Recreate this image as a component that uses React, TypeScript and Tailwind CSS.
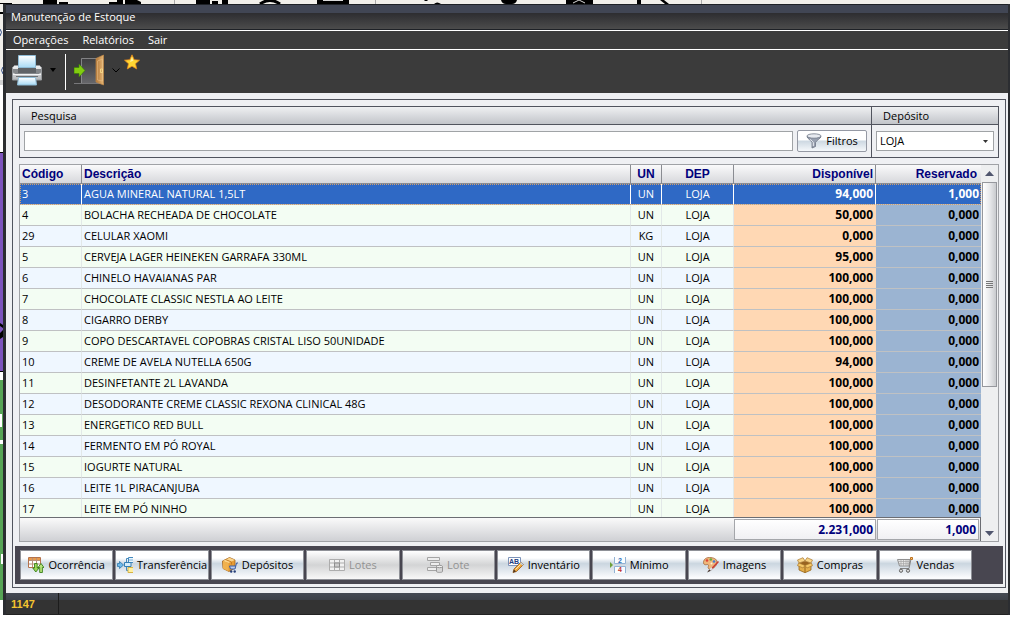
import { ReactNode } from 'react';
import { clsx } from 'clsx';

interface StockItem {
  code: string;
  description: string;
  unit: string;
  deposit: string;
  available: string;
  reserved: string;
}

const items: StockItem[] = [
  { code: '3', description: 'AGUA MINERAL NATURAL 1,5LT', unit: 'UN', deposit: 'LOJA', available: '94,000', reserved: '1,000' },
  { code: '4', description: 'BOLACHA RECHEADA DE CHOCOLATE', unit: 'UN', deposit: 'LOJA', available: '50,000', reserved: '0,000' },
  { code: '29', description: 'CELULAR XAOMI', unit: 'KG', deposit: 'LOJA', available: '0,000', reserved: '0,000' },
  { code: '5', description: 'CERVEJA LAGER HEINEKEN GARRAFA 330ML', unit: 'UN', deposit: 'LOJA', available: '95,000', reserved: '0,000' },
  { code: '6', description: 'CHINELO HAVAIANAS PAR', unit: 'UN', deposit: 'LOJA', available: '100,000', reserved: '0,000' },
  { code: '7', description: 'CHOCOLATE CLASSIC NESTLA AO LEITE', unit: 'UN', deposit: 'LOJA', available: '100,000', reserved: '0,000' },
  { code: '8', description: 'CIGARRO DERBY', unit: 'UN', deposit: 'LOJA', available: '100,000', reserved: '0,000' },
  { code: '9', description: 'COPO DESCARTAVEL COPOBRAS CRISTAL LISO 50UNIDADE', unit: 'UN', deposit: 'LOJA', available: '100,000', reserved: '0,000' },
  { code: '10', description: 'CREME DE AVELA NUTELLA 650G', unit: 'UN', deposit: 'LOJA', available: '94,000', reserved: '0,000' },
  { code: '11', description: 'DESINFETANTE 2L LAVANDA', unit: 'UN', deposit: 'LOJA', available: '100,000', reserved: '0,000' },
  { code: '12', description: 'DESODORANTE CREME CLASSIC REXONA CLINICAL 48G', unit: 'UN', deposit: 'LOJA', available: '100,000', reserved: '0,000' },
  { code: '13', description: 'ENERGETICO RED BULL', unit: 'UN', deposit: 'LOJA', available: '100,000', reserved: '0,000' },
  { code: '14', description: 'FERMENTO EM PÓ ROYAL', unit: 'UN', deposit: 'LOJA', available: '100,000', reserved: '0,000' },
  { code: '15', description: 'IOGURTE NATURAL', unit: 'UN', deposit: 'LOJA', available: '100,000', reserved: '0,000' },
  { code: '16', description: 'LEITE 1L PIRACANJUBA', unit: 'UN', deposit: 'LOJA', available: '100,000', reserved: '0,000' },
  { code: '17', description: 'LEITE EM PÓ NINHO', unit: 'UN', deposit: 'LOJA', available: '100,000', reserved: '0,000' }
];

function Icon({ children }: { children: ReactNode }) {
  return (
    <svg width="16" height="16" viewBox="0 0 16 16" className="shrink-0" aria-hidden="true">
      {children}
    </svg>
  );
}

function PrinterIcon() {
  return (
    <svg width="32" height="32" viewBox="0 0 32 32" aria-hidden="true">
      <defs>
        <linearGradient id="paper" x1="0" y1="0" x2="0" y2="1">
          <stop offset="0" stopColor="#ffffff" />
          <stop offset="1" stopColor="#a9dbf5" />
        </linearGradient>
        <linearGradient id="printer" x1="0" y1="0" x2="0" y2="1">
          <stop offset="0" stopColor="#f2f2f2" />
          <stop offset="1" stopColor="#b4b7ba" />
        </linearGradient>
      </defs>
      <path d="M2.5 11.500h25l2 2v12.500h-29v-12.500z" fill="url(#printer)" stroke="#96999c" />
      <path d="M1 15h28v3.500l-3 2H4l-3-2z" fill="#85888b" />
      <path d="M6 14h18v5H6z" fill="#606366" />
      <path d="M6.500 1.500h17v12h-17z" fill="url(#paper)" stroke="#8fbcd6" />
      <path d="M1 20.500h28" stroke="#f4f4f4" />
      <path d="M4 22.500h22" stroke="#6c7073" />
      <path d="M6.500 23.500h17l1 7.500h-19z" fill="url(#paper)" stroke="#8fbcd6" />
    </svg>
  );
}

function DoorIcon() {
  return (
    <svg width="32" height="32" viewBox="0 0 32 32" aria-hidden="true">
      <defs>
        <linearGradient id="door" x1="0" y1="0" x2="1" y2="0">
          <stop offset="0" stopColor="#b4783a" />
          <stop offset="1" stopColor="#e4b574" />
        </linearGradient>
        <linearGradient id="doorway" x1="0" y1="0" x2="0" y2="1">
          <stop offset="0" stopColor="#3e3e41" />
          <stop offset="1" stopColor="#66666a" />
        </linearGradient>
      </defs>
      <path d="M0 29.500h30" stroke="#77777a" />
      <path d="M7.500 29V4.500h21V29" fill="url(#doorway)" stroke="#a0a0a3" strokeWidth=".7" />
      <path d="M22 4.500l7.500-3.500v30L22 28z" fill="url(#door)" stroke="#c08a49" strokeWidth=".7" />
      <path d="M23.500 7l5-2v22l-5-1z" fill="none" stroke="#edc791" strokeWidth=".5" />
      <path d="M28.500 15v3.500h-2V15z" fill="none" stroke="#fbe18b" strokeWidth=".8" />
      <path d="M0 13.500h5V10l6 6.500-6 6.500v-3.500H0z" fill="#82cc10" stroke="#3b7d08" strokeWidth=".7" />
    </svg>
  );
}

function StarIcon() {
  return (
    <svg width="16" height="16" viewBox="0 0 16 16" aria-hidden="true">
      <path d="M8 .8l2.200 4.900 5.300.5-4 3.500 1.200 5.200L8 12.200l-4.700 2.700 1.200-5.200-4-3.500 5.300-.5z" fill="#ffd633" stroke="#e98a1c" strokeWidth=".8" />
      <path d="M8 3l1.400 3.700L6 8z" fill="#fff2a0" />
    </svg>
  );
}

function FunnelIcon() {
  return (
    <Icon>
      <path d="M1 3.500c0 2 4.500 4 5 6V15l3.500-1.500v-4c.5-2 5.500-4 5.500-6z" fill="#98a0b0" stroke="#6c7484" strokeWidth=".8" />
      <ellipse cx="8" cy="3" rx="7" ry="2.200" fill="#e7eaf0" stroke="#707888" strokeWidth=".8" />
      <path d="M4 6.500c1.500 1 3 2 3.300 3.200V13" fill="none" stroke="#edf0f5" />
    </Icon>
  );
}

function OccurrenceIcon() {
  return (
    <Icon>
      <path d="M.5.500h12v10H.5z" fill="#fff" stroke="#b4734c" />
      <path d="M1 1h11v2.500H1z" fill="#e89a4c" />
      <path d="M1 3.500h11M1 7h11M4.500 1v9M8.500 1v9" stroke="#b9917c" />
      <path d="M6.500 6.500h2.700v4.500H11L7.800 15 4.800 11h1.700z" fill="#9ed858" stroke="#39801a" strokeWidth=".9" />
      <path d="M11.700 15.500v-5H10l3-4 3 4h-1.600v5z" fill="#b7e47b" stroke="#39801a" strokeWidth=".9" />
    </Icon>
  );
}

function TransferIcon() {
  return (
    <Icon>
      <path d="M16 .5h-4.500v5H16" fill="#e9f6ff" stroke="#4489bd" />
      <path d="M12 3h4" stroke="#78aed5" />
      <path d="M11.500 1.500h-2v12h2" fill="none" stroke="#4489bd" />
      <path d="M16 10.500h-5v5h5" fill="#fff0a0" stroke="#d6b347" />
      <path d="M7.500 5.500H14v4H7.500z" fill="#d5ecfb" stroke="#347fb5" />
      <path d="M.5 6.500h2v-2l4 3.500-4 3.500v-2h-2z" fill="#70baea" stroke="#2c76ab" strokeWidth=".8" />
    </Icon>
  );
}

function DepositsIcon() {
  return (
    <Icon>
      <path d="M.5 4L7.500.5 13 3v8l-6 3.500-6-3z" fill="#e69c35" stroke="#a2621a" strokeWidth=".8" />
      <path d="M.8 4L7.500.8 12.800 3 6.500 6z" fill="#fbd58b" />
      <path d="M6.500 6v8.200L1 11.500V4z" fill="#f0b14e" />
      <path d="M3.500 2.500L9.500 5v2.500" stroke="#c67c24" fill="none" />
      <path d="M16 6h-1.500L13 12H8.500L7.500 9h6.300" fill="#b9cdf0" stroke="#3a5ca4" />
      <circle cx="9.200" cy="14.500" r="1.200" fill="#263f7a" />
      <circle cx="12.700" cy="14.500" r="1.200" fill="#263f7a" />
    </Icon>
  );
}

function LotsIcon() {
  return (
    <Icon>
      <path d="M.5 2.500h15v11H.5z" fill="#f2f2f2" stroke="#adadad" />
      <path d="M.5 6h15M.5 10h15M5.500 2.500v11M10.500 2.500v11" stroke="#adadad" />
      <path d="M5.500 6h5v4h-5z" fill="#ccc" stroke="#8e8e8e" />
    </Icon>
  );
}

function LotIcon() {
  return (
    <Icon>
      <path d="M.5.500h12v3H.5zM3.500 5.500h9v3h-9zM.5 10.500h9v3h-9z" fill="#eee" stroke="#a4a4a4" />
      <path d="M9.500 9.500v5c0 1.200 6 1.200 6 0v-5" fill="#d7d7d7" stroke="#969696" />
      <ellipse cx="12.500" cy="9.500" rx="3" ry="1.200" fill="#f1f1f1" stroke="#969696" />
    </Icon>
  );
}

function InventoryIcon() {
  return (
    <Icon>
      <path d="M.5.500h12v8H.5z" fill="#fff" stroke="#7c92b8" />
      <text x="1" y="7" fontSize="7" fontWeight="bold" fontFamily="Liberation Sans, sans-serif" fill="#233e82">AB</text>
      <path d="M5 15.500l1-3.500 7-7 2.500 2.500-7 7z" fill="#f0a83d" stroke="#955717" strokeWidth=".8" />
      <path d="M12 6l1-1 2.500 2.500-1 1z" fill="#b9d4ef" />
      <path d="M5 15.500l1-3 2 2z" fill="#4a3422" />
      <path d="M7.500 12.500l5-5" stroke="#ffe5a9" />
    </Icon>
  );
}

function MinimumIcon() {
  return (
    <Icon>
      <path d="M0 5l3 3-3 3z" fill="#6ea13a" />
      <path d="M4.500 0v6.500h11V0M4.500 16V9.500h11V16" fill="#fbfdff" stroke="#92b2d4" />
      <text x="8" y="6" fontSize="7" fontWeight="bold" fontFamily="Liberation Sans, sans-serif" fill="#2c70ba">2</text>
      <text x="8" y="15" fontSize="7" fontWeight="bold" fontFamily="Liberation Sans, sans-serif" fill="#bd3333">4</text>
    </Icon>
  );
}

function ImagesIcon() {
  return (
    <Icon>
      <path d="M6.500.5C2 .5.500 3.300.500 5.700c0 2 2 2.300 3.300 1.900 1.500-.4 2.200.6 1.500 2.100-.6 1.500.4 2.600 2.200 2.300C11 11.500 14 8.500 14 5 14 2 10.500.5 6.500.5z" fill="#efb67b" stroke="#a5693b" strokeWidth=".8" />
      <circle cx="4" cy="3.500" r="1.300" fill="#df4336" />
      <circle cx="7.800" cy="2.500" r="1.300" fill="#69ac3c" />
      <circle cx="11" cy="4.500" r="1.300" fill="#477fd0" />
      <circle cx="8.500" cy="6.500" r="1" fill="#fff1d8" />
      <path d="M4 15.500l2.500-3.500 2 1.500z" fill="#49352d" />
      <path d="M8 12.500l7.500-8" stroke="#c83b35" strokeWidth="1.500" />
      <path d="M7 13l2-2" stroke="#dce3e8" strokeWidth="2" />
    </Icon>
  );
}

function PurchasesIcon() {
  return (
    <Icon>
      <path d="M2 6l6 2 6-2v7l-6 2.700L2 13z" fill="#e3ae4b" stroke="#96641c" strokeWidth=".8" />
      <path d="M8 8v7.500" stroke="#96641c" />
      <path d="M2 6l6-2 6 2-6 2.500z" fill="#996420" />
      <path d="M2 6L.5 3 6 .7 8 4zM14 6l1.500-3L10 .7 8 4z" fill="#f7d486" stroke="#aa7830" strokeWidth=".7" />
      <path d="M2 6L.3 8.500 6 11l2-2.500zM14 6l1.700 2.500L10 11 8 8.500z" fill="#f4c867" stroke="#aa7830" strokeWidth=".7" />
    </Icon>
  );
}

function SalesIcon() {
  return (
    <Icon>
      <path d="M.5 2.500H13l-1 6.500H2.500z" fill="#e7e7e7" stroke="#909090" />
      <path d="M1 4.500h12M2 6.700h10.500M4 3v6M6.500 3v6M9 3v6M11 3v6" stroke="#a4a4a4" strokeWidth=".7" />
      <path d="M14 2l-2 9.500H3" fill="none" stroke="#828282" />
      <path d="M13.500.500h2v2h-2z" fill="#ffcb72" stroke="#bb7122" />
      <circle cx="4" cy="13.700" r="1.600" fill="#ddd" stroke="#606060" />
      <circle cx="11" cy="13.700" r="1.600" fill="#ddd" stroke="#606060" />
    </Icon>
  );
}

const actions = [
  { label: 'Ocorrência', icon: <OccurrenceIcon /> },
  { label: 'Transferência', icon: <TransferIcon /> },
  { label: 'Depósitos', icon: <DepositsIcon /> },
  { label: 'Lotes', icon: <LotsIcon />, disabled: true },
  { label: 'Lote', icon: <LotIcon />, disabled: true },
  { label: 'Inventário', icon: <InventoryIcon /> },
  { label: 'Mínimo', icon: <MinimumIcon /> },
  { label: 'Imagens', icon: <ImagesIcon /> },
  { label: 'Compras', icon: <PurchasesIcon /> },
  { label: 'Vendas', icon: <SalesIcon /> }
];

// Slivers of the main application that stay visible behind the window
function BackdropTop() {
  return (
    <div className="h-1 overflow-hidden bg-[#f1efea]">
      <svg width="1010" height="4" viewBox="0 0 1010 4" aria-hidden="true">
        <path d="M0 3h12v1H0zM43 0h14v4H43zM59 2h9v2h-9zM109 2h8V0h6v4h-14zM125 0h12l4 2v2h-16zM196 0h14v4h-14zM212 1h6v3h-6zM222 0h6v4h-6z" />
        <path d="M260 4q10-7 20 0" fill="none" stroke="#000" strokeWidth="3" />
        <path d="M317 0h32v4h-32zM424 0h4l-1 1h-2zM434 4q3-3 7 0zM501 0h16q-1 4-5 4h-6q-4 0-5-4zM566 0h27v4h-27zM637 0h4v4h-4zM660 0h4l5 4h-4z" />
        <path d="M323 .5h20M573 3l6-3 6 3" stroke="#d8d8d8" fill="none" />
        <path d="M174.500 0v4M375.500 0v4M701.500 0v4" stroke="#aaa" />
      </svg>
    </div>
  );
}

function BackdropLeft() {
  return (
    <div className="w-[3px] shrink-0 overflow-hidden">
      <svg width="3" height="610" viewBox="0 4 3 610" aria-hidden="true">
        <path d="M0 4h3v76H0z" fill="#f1efea" />
        <path d="M0 12h3v2H0z" />
        <path d="M0 29q3 3 0 7M3 67q-3 3 0 7" fill="none" stroke="#344f88" />
        <path d="M0 80h3v5H0z" fill="#d2d2d2" />
        <path d="M0 152h3v219H0z" fill="#7d54bd" />
        <path d="M0 152h3v1H0zM0 371h3v1H0zM0 323l3 2v3l-3-2zM0 333l3-3v7l-3 2z" />
        <path d="M0 380h3v220H0z" fill="#57a456" />
        <path d="M0 414h2v13H0zM0 440h3v4H0zM1 554h2v10H1z" fill="#fff" />
      </svg>
    </div>
  );
}

function SearchBar() {
  return (
    <form className="flex border border-[#51545e]" onSubmit={(event) => event.preventDefault()}>
      <div className="min-w-0 flex-1">
        <label
          htmlFor="search"
          className="block h-[18px] border-b border-[#51545e] bg-linear-to-b from-[#eff0f2] to-[#c2c5ca] pl-[11px] leading-[17px]"
        >
          Pesquisa
        </label>
        <div className="flex items-center gap-1 px-1 py-[5px]">
          <input id="search" type="text" className="h-5 min-w-0 flex-1 border border-[#a0a3a6] bg-white px-1 outline-none" />
          <button
            type="submit"
            className="flex h-[22px] w-[70px] items-center justify-center gap-1 rounded-xs border border-[#9599a4] bg-linear-to-b from-white from-45% via-[#cdd8e2] via-50% to-[#f5f8fb]"
          >
            <FunnelIcon />
            Filtros
          </button>
        </div>
      </div>
      <div className="w-[127px] border-l border-[#51545e]">
        <label
          htmlFor="deposit"
          className="block h-[18px] border-b border-[#51545e] bg-linear-to-b from-[#eff0f2] to-[#c2c5ca] pl-[11px] leading-[17px]"
        >
          Depósito
        </label>
        <div className="grid items-center px-1 py-[6px]">
          <select id="deposit" className="col-start-1 row-start-1 h-5 appearance-none border border-[#a0a3a6] bg-white pl-[3px]">
            <option>LOJA</option>
          </select>
          <svg width="5" height="3" viewBox="0 0 5 3" className="pointer-events-none col-start-1 row-start-1 mr-1.5 justify-self-end" aria-hidden="true">
            <path d="M0 0h5L2.500 3z" fill="#333" />
          </svg>
        </div>
      </div>
    </form>
  );
}

function StockTable() {
  return (
    <table className="w-full table-fixed border-separate border-spacing-0">
      <colgroup>
        <col className="w-[62px]" />
        <col />
        <col className="w-[31px]" />
        <col className="w-[72px]" />
        <col className="w-[142px]" />
        <col className="w-[105px]" />
      </colgroup>
      <thead>
        <tr className="h-[19px] bg-linear-to-b from-[#fafafb] to-[#d5d6da] font-['Liberation_Sans',sans-serif] text-xs leading-4 text-[#00007b] *:border-b *:border-[#8a8c92] *:py-0 *:font-bold">
          <th className="border-r px-0.5 text-left">Código</th>
          <th className="border-r px-0.5 text-left">Descrição</th>
          <th className="border-r px-0 text-center">UN</th>
          <th className="border-r px-0 text-center">DEP</th>
          <th className="border-r px-0.5 text-right">Disponível</th>
          <th className="px-1 text-right">Reservado</th>
        </tr>
      </thead>
      <tbody>
        {items.map((item, index) => {
          const selected = index === 0;
          return (
            <tr
              key={item.code}
              className={clsx(
                'h-[21px] leading-4 *:border-b *:border-b-[#bfc1c3] *:py-0',
                selected && 'bg-[#2f69c5] text-white outline-1 -outline-offset-1 outline-dotted outline-[#d0a070] *:border-r-white',
                !selected && (index % 2 === 1 ? 'bg-[#f3fdf3]' : 'bg-[#eff7ff]'),
                !selected && '*:border-r-[#e2e8e8]'
              )}
            >
              <td className="border-r pl-0.5">{item.code}</td>
              <td className="truncate border-r pl-0.5">{item.description}</td>
              <td className="border-r text-center">{item.unit}</td>
              <td className="border-r text-center">{item.deposit}</td>
              <td className={clsx('text-right text-xs leading-4 font-bold', selected ? 'border-r pr-0.5' : 'bg-[#ffd8b4] pr-[3px]')}>
                {item.available}
              </td>
              <td className={clsx('pr-0.5 text-right text-xs leading-4 font-bold', !selected && 'bg-[#9bb4d2]')}>
                {item.reserved}
              </td>
            </tr>
          );
        })}
      </tbody>
    </table>
  );
}

function ScrollBar() {
  return (
    <div className="flex w-[17px] shrink-0 flex-col items-center bg-[#eeeff0]">
      <button type="button" aria-label="Rolar para cima" className="flex h-[17px] w-full items-center justify-center">
        <svg width="9" height="5" viewBox="0 0 9 5" aria-hidden="true">
          <path d="M0 5h9L4.500 0z" fill="#50566e" />
        </svg>
      </button>
      <div className="flex h-[205px] w-[15px] flex-col items-center justify-center gap-px border border-[#96989d] bg-linear-to-r from-white via-[#e9eaec] to-[#c9cbce]">
        <span className="h-px w-[7px] bg-[#777]" />
        <span className="h-px w-[7px] bg-[#777]" />
        <span className="h-px w-[7px] bg-[#777]" />
        <span className="h-px w-[7px] bg-[#777]" />
      </div>
      <button type="button" aria-label="Rolar para baixo" className="mt-auto flex h-4 w-full items-center justify-center">
        <svg width="9" height="5" viewBox="0 0 9 5" aria-hidden="true">
          <path d="M0 0h9L4.500 5z" fill="#50566e" />
        </svg>
      </button>
    </div>
  );
}

function StockGrid() {
  return (
    <div className="mt-1.5 flex border border-[#a0a2a6]">
      <div className="min-w-0 flex-1">
        <div className="h-[352px] overflow-hidden">
          <StockTable />
        </div>
        <div className="flex h-6 items-center justify-end border-t border-r border-[#6b6d73] bg-linear-to-b from-[#fafafa] to-[#cfd0d4] text-xs font-bold text-[#00007b]">
          <output className="h-[21px] w-[142px] border border-[#a4a6aa] bg-linear-to-b from-white to-[#f0f0f3] pr-0.5 text-right leading-[19px]">
            2.231,000
          </output>
          <output className="mr-px ml-px h-[21px] w-[102px] border border-[#a4a6aa] bg-linear-to-b from-white to-[#f0f0f3] pr-0.5 text-right leading-[19px]">
            1,000
          </output>
        </div>
      </div>
      <ScrollBar />
    </div>
  );
}

function ActionBar() {
  return (
    <div className="mx-[-4px] mt-1 flex gap-0.5 bg-[#484650] py-1 pr-[31px] pl-[5px]">
      {actions.map((action) => (
        <button
          key={action.label}
          type="button"
          disabled={action.disabled}
          className={clsx(
            'flex h-[30px] min-w-0 flex-1 items-center justify-center gap-1 border border-[#8f9197] bg-linear-to-b',
            action.disabled
              ? 'from-white from-0% via-[#d3d4d5] via-50% to-[#f8f8f8] to-100% text-[#929292]'
              : 'from-white from-25% via-[#cbd6e0] via-45% to-[#fafbfd] to-95% text-black'
          )}
        >
          {action.icon}
          {action.label}
        </button>
      ))}
    </div>
  );
}

export default function App() {
  return (
    <div className="flex min-h-screen flex-col bg-white font-['Open_Sans',sans-serif] text-[11px] leading-4 text-black">
      <BackdropTop />
      <div className="flex">
        <BackdropLeft />
        <main className="min-w-0 flex-1 border-r-2 border-l-[3px] border-[#2b2d31]">
          <header>
            <div className="flex h-[26px] items-center border-y border-[#1e2126] bg-linear-to-b from-[#414654] from-35% via-[#2e2e31] via-35% to-[#4c4c4c] pl-[5px]">
              <h1 className="text-white">Manutenção de Estoque</h1>
            </div>
            <nav className="flex h-5 items-center gap-3.5 border-y border-white bg-[#3b3b3b] pl-[7px] text-white">
              <a href="#operacoes">Operações</a>
              <a href="#relatorios">Relatórios</a>
              <a href="#sair">Sair</a>
            </nav>
            <div className="flex h-[43px] items-start bg-[#3b3b3b] pt-1 pl-1.5">
              <button type="button" aria-label="Imprimir" className="flex items-center gap-1.5">
                <PrinterIcon />
                <svg width="6" height="4" viewBox="0 0 6 4" aria-hidden="true">
                  <path d="M0 0h6L3 4z" />
                </svg>
              </button>
              <span className="mr-2 ml-[9px] h-9 w-px bg-white" />
              <button type="button" aria-label="Fechar" className="flex items-center gap-1.5">
                <DoorIcon />
                <svg width="8" height="5" viewBox="0 0 8 5" aria-hidden="true">
                  <path d="M.5.500l3.500 3.500 3.500-3.500" fill="none" stroke="#000" />
                </svg>
              </button>
              <button type="button" aria-label="Favoritos" className="ml-1">
                <StarIcon />
              </button>
            </div>
          </header>

          <div className="bg-[#eff0f3] pt-1.5 pr-0.5 pb-[5px] pl-1.5">
            <div className="border border-[#51545e] px-1.5 pt-1.5 pb-[3px]">
              <SearchBar />
              <StockGrid />
              <ActionBar />
            </div>
          </div>

          <footer className="h-[22px] border-b border-[#222] bg-linear-to-b from-[#454a54] from-0% via-[#3c4048] via-35% to-[#333333] to-35% pl-[5px]">
            <span className="inline-flex h-[21px] w-12 items-center border-r border-[#1c1c1c] font-['Liberation_Sans',sans-serif] font-bold text-[#f4c430]">
              1147
            </span>
          </footer>
        </main>
      </div>
    </div>
  );
}
